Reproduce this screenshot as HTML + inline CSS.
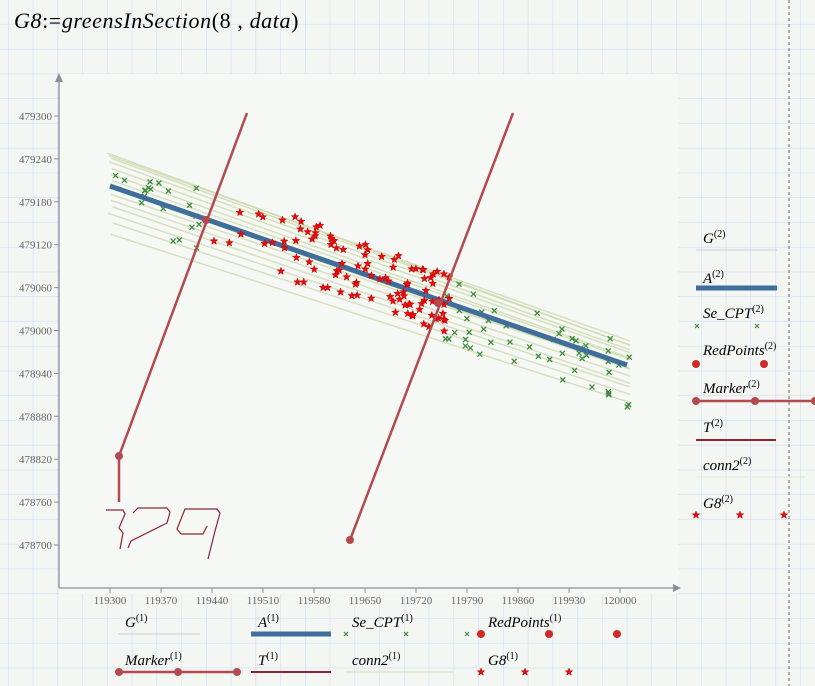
<!DOCTYPE html>
<html><head><meta charset="utf-8"><style>
html,body{margin:0;padding:0;background:#f4f6f3;width:815px;height:686px;overflow:hidden}
svg{display:block}
text{font-family:"Liberation Serif",serif;font-style:italic}
.t{font-family:"Liberation Serif",serif;font-style:normal;font-size:11px;fill:#666}
</style></head><body>
<svg id="s" width="815" height="686" viewBox="0 0 815 686" xmlns="http://www.w3.org/2000/svg">
<defs>
<pattern id="g" x="8" y="0" width="24.75" height="24.75" patternUnits="userSpaceOnUse">
<path d="M0 0V24.75M0 24.75H24.75" stroke="#cfe0f2" stroke-width="1.3" fill="none"/>
</pattern>
</defs>
<rect width="815" height="686" fill="#f4f6f3"/>
<rect width="815" height="686" fill="url(#g)"/>
<rect x="59" y="74" width="619" height="520" fill="#f6f8f5"/>
<line x1="789" y1="0" x2="789" y2="686" stroke="#888" stroke-width="1.3" stroke-dasharray="3,3"/>
<text x="14" y="28" font-size="22" letter-spacing="0.6">G8<tspan font-style="normal">:=</tspan>greensInSection<tspan font-style="normal">(8 ,</tspan> data<tspan font-style="normal">)</tspan></text>
<g id="plot"></g>
<line x1="59" y1="80" x2="59" y2="588" stroke="#8a8f99" stroke-width="1.3"/>
<polygon points="55,82 63,82 59,73" fill="#8a8f99"/>
<line x1="59" y1="588" x2="675" y2="588" stroke="#8a8f99" stroke-width="1.3"/>
<polygon points="673,584 673,592 681,588" fill="#8a8f99"/>
<g id="ticks"></g>
<g id="leg"></g>
</svg>
<script>
var NS="http://www.w3.org/2000/svg";
function el(p,t,a,txt){var e=document.createElementNS(NS,t);for(var k in a)e.setAttribute(k,a[k]);if(txt!==undefined)e.textContent=txt;document.getElementById(p).appendChild(e);return e;}
var seed=7;function r(){seed=(seed*16807)%2147483647;return seed/2147483647;}
for(var i=0;i<11;i++){var v=479300-60*i,y=116+i*42.9;
 if(y>580)break;el("ticks","line",{x1:54,y1:y,x2:59,y2:y,stroke:"#8a8f99"});
 el("ticks","text",{x:52,y:y+4,"text-anchor":"end","class":"t"},v);}
for(var i=0;i<11;i++){var u=119300+70*i,x=110+i*51;
 el("ticks","line",{x1:x,y1:588,x2:x,y2:593,stroke:"#8a8f99"});
 el("ticks","text",{x:x,y:604,"text-anchor":"middle","class":"t"},u);}
function ly(x){return 186+(x-110)*0.346;}
var offs=[-32,-30,-28,-24,-18,-12,-6,2,8,14,20,28,36,48];
for(var i=0;i<offs.length;i++){var o=offs[i];var x1=107+r()*6,x2=630;
 el("plot","line",{x1:x1,y1:ly(x1)+o,x2:x2,y2:ly(x2)+o*0.75+(r()-0.5)*8,stroke:"#cad9ab","stroke-width":1.5,opacity:0.75});}
function cross(x,y){el("plot","path",{d:"M"+(x-2.5)+" "+(y-2.5)+"l5 5m0 -5l-5 5",stroke:"#3f8a3f","stroke-width":1.3});}
for(var i=0;i<20;i++){var x=110+r()*95;cross(x,ly(x)+(r()-0.45)*70);}
for(var i=0;i<50;i++){var x=445+r()*185;cross(x,ly(x)+(r()-0.35)*65);}
el("plot","line",{x1:110,y1:186,x2:627,y2:365,stroke:"#3f6e9a","stroke-width":5});
function star(x,y,s){var d="";for(var k=0;k<10;k++){var a=-Math.PI/2+k*Math.PI/5,rr=k%2?s*0.42:s;d+=(k?"L":"M")+(x+rr*Math.cos(a)).toFixed(1)+" "+(y+rr*Math.sin(a)).toFixed(1);}
 el("plot","path",{d:d+"Z",fill:"#e01010",stroke:"#c00",'stroke-width':0.5});}
for(var i=0;i<105;i++){var x=i<20?205+r()*120:300+Math.pow(r(),0.9)*150;star(x,ly(x)+(r()-0.5)*(i<20?70:62),4);}
el("plot","polyline",{points:"119,502 119,456 247,113",fill:"none",stroke:"#b34a4f","stroke-width":2.5});
el("plot","line",{x1:350,y1:540,x2:513,y2:113,stroke:"#b34a4f","stroke-width":2.5});
[[119,456],[350,540],[206,220],[438,303]].forEach(function(p){el("plot","circle",{cx:p[0],cy:p[1],r:4,fill:"#b34a4f"});});
el("plot","path",{d:"M106 510h17l2 4-6 14 4 5-3 16 M133 513l5-5h29l3 4-3 11-36 18-3 7 M181 534l-4-5 8-20h32l3 4-5 18-7 28 M181 534h22l4-8",fill:"none",stroke:"#8b2430","stroke-width":1.2});
function lab(x,y,n,sup){var t=el("leg","text",{x:x,y:y,"font-size":15},n);var s=document.createElementNS(NS,"tspan");s.setAttribute("font-size","10");s.setAttribute("font-style","normal");s.setAttribute("dy","-6");s.textContent="("+sup+")";t.appendChild(s);}
function ln(x1,x2,y,c,w){el("leg","line",{x1:x1,y1:y,x2:x2,y2:y,stroke:c,"stroke-width":w});}
function dot(x,y){el("leg","circle",{cx:x,cy:y,r:4,fill:"#d12a2a"});}
function mdot(x,y){el("leg","circle",{cx:x,cy:y,r:4,fill:"#b34a4f"});}
function cr(x,y){el("leg","path",{d:"M"+(x-2)+" "+(y-2)+"l4 4m0 -4l-4 4",stroke:"#3f8a3f","stroke-width":1.2});}
function st(x,y){star(x,y,4);var p=document.getElementById("plot").lastChild;document.getElementById("leg").appendChild(p);}
lab(125,627,"G",1);ln(118,200,634,"#ccc",1);
lab(258,627,"A",1);ln(251,331,634,"#3f6e9a",5);
lab(352,627,"Se_CPT",1);cr(346,634);cr(406,634);cr(467,634);
lab(488,627,"RedPoints",1);dot(481,634);dot(549,634);dot(617,634);
lab(125,665,"Marker",1);ln(119,237,672,"#b34a4f",2.5);mdot(119,672);mdot(178,672);mdot(237,672);
lab(258,665,"T",1);ln(251,331,672,"#8b2430",2);
lab(352,665,"conn2",1);ln(345,453,672,"#dfe4cc",1.5);
lab(488,665,"G8",1);st(481,672);st(525,672);st(569,672);
lab(703,243,"G",2);ln(696,777,250,"#ccc",1);
lab(703,283,"A",2);ln(696,777,288,"#3f6e9a",5);
lab(703,318,"Se_CPT",2);cr(697,326);cr(757,326);
lab(703,355,"RedPoints",2);dot(696,364);dot(764,364);
lab(703,393,"Marker",2);ln(696,815,401,"#b34a4f",2.5);mdot(696,401);mdot(755,401);mdot(815,401);
lab(703,432,"T",2);ln(696,776,440,"#8b2430",2);
lab(703,470,"conn2",2);ln(696,805,477,"#e3e7d6",1);
lab(703,508,"G8",2);st(696,515);st(740,515);st(784,515);
</script>
</body></html>
